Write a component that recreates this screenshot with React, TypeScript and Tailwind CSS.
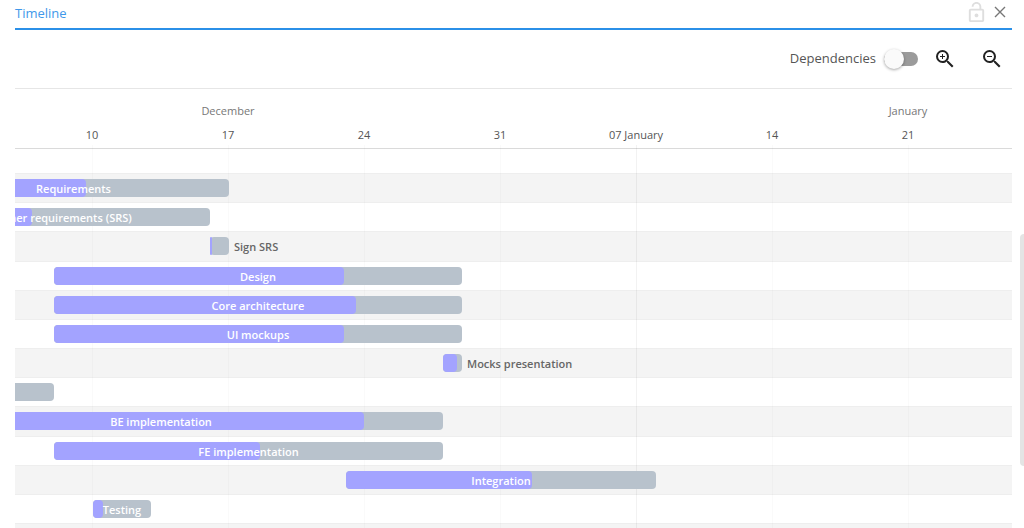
import { useState } from "react";
import { MdLockOpen, MdZoomIn, MdZoomOut } from "react-icons/md";

const WEEK_WIDTH = 136;
// x of December 10 inside the chart
const ORIGIN = 77;

const dayToX = (day: number) =>
  Math.ceil(ORIGIN + ((day - 10) * WEEK_WIDTH) / 7 + 0.5);

type Task = {
  name: string;
  // days counted from December 1, so 39 is January 8
  start: number;
  end: number;
  progress: number;
  labelOutside?: boolean;
};

const tasks: Task[] = [
  { name: "Requirements", start: 1, end: 17, progress: 54 },
  { name: "Other requirements (SRS)", start: 1, end: 16, progress: 39 },
  { name: "Sign SRS", start: 16, end: 17, progress: 8, labelOutside: true },
  { name: "Design", start: 8, end: 29, progress: 71 },
  { name: "Core architecture", start: 8, end: 29, progress: 74 },
  { name: "UI mockups", start: 8, end: 29, progress: 71 },
  { name: "Mocks presentation", start: 28, end: 29, progress: 76, labelOutside: true },
  { name: "", start: 1, end: 8, progress: 0 },
  { name: "BE implementation", start: -1, end: 28, progress: 86 },
  { name: "FE implementation", start: 8, end: 28, progress: 53 },
  { name: "Integration", start: 23, end: 39, progress: 60 },
  { name: "Testing", start: 10, end: 13, progress: 17 },
];

const weeks = [
  { label: "10" },
  { label: "17", month: "December" },
  { label: "24" },
  { label: "31" },
  { label: "07 January", strong: true },
  { label: "14" },
  { label: "21", month: "January" },
];

function TaskBar({ task }: { task: Task }) {
  const left = dayToX(task.start);
  const width = dayToX(task.end) - left;

  return (
    <div
      className="absolute top-[5px] z-10 h-[18px] rounded bg-[#b8c2cc]"
      style={{ left, width }}
    >
      <div
        className="h-full rounded bg-[#a3a3ff]"
        style={{ width: `${task.progress}%` }}
      />
      <span
        className={
          task.labelOutside
            ? "absolute top-0 left-full pl-[5px] leading-[19px] whitespace-nowrap text-[#666]"
            : "absolute inset-0 text-center leading-[19px] whitespace-nowrap text-white"
        }
      >
        {task.name}
      </span>
    </div>
  );
}

export default function App() {
  const [dependencies, setDependencies] = useState(false);

  return (
    <div className="relative h-screen overflow-hidden bg-white pl-[15px] pr-3 font-['Open_Sans','Noto_Sans',sans-serif] text-[#555]">
      <header className="flex h-[30px] items-center justify-between border-b-2 border-[#2b90e8] pr-0.5">
        <h1 className="text-[13px] text-[#3f98ea]">Timeline</h1>
        <div className="flex items-center gap-0.5 pb-1">
          <button type="button" aria-label="Unlock" className="text-[#dedede]">
            <MdLockOpen size={23} />
          </button>
          <button type="button" aria-label="Close" className="p-1 text-[#777]">
            <svg width="12" height="12" viewBox="0 0 12 12" fill="none" stroke="currentColor" strokeWidth="1.4">
              <path d="M1 1l10 10M11 1L1 11" />
            </svg>
          </button>
        </div>
      </header>

      <div className="flex h-[59px] items-center justify-end border-b border-[#e6e6e6] pr-2">
        <label className="flex items-center gap-2 text-[13px]">
          Dependencies
          <input
            type="checkbox"
            role="switch"
            checked={dependencies}
            onChange={(e) => setDependencies(e.target.checked)}
            className="relative h-[14px] w-[34px] appearance-none rounded-full bg-[#9b9b9b] before:absolute before:-top-[3px] before:left-0 before:size-5 before:rounded-full before:bg-[#fafafa] before:shadow-[0_1px_3px_rgba(0,0,0,0.35)] checked:bg-[#a3a3ff] checked:before:left-[14px]"
          />
        </label>
        <button type="button" aria-label="Zoom in" className="ml-[15px] text-[#222]">
          <MdZoomIn size={24} />
        </button>
        <button type="button" aria-label="Zoom out" className="ml-[23px] text-[#222]">
          <MdZoomOut size={24} />
        </button>
      </div>

      <div className="overflow-hidden">
        <div className="flex h-[60px] border-b border-[#dadada] pt-3 pl-[9px] text-center text-[11px] leading-5">
          {weeks.map((week) => (
            <div key={week.label} className="flex w-[136px] shrink-0 flex-col gap-1">
              <span className="h-5 text-[#777]">{week.month}</span>
              <span className="h-5">{week.label}</span>
            </div>
          ))}
        </div>

        <div className="relative pt-6">
          <div className="flex h-[350px] flex-col text-[11px] font-semibold">
            {tasks.map((task, i) => (
              <div
                key={i}
                className="relative flex-1 border-t border-[#eeeeee] odd:bg-[#f4f4f4]"
              >
                <TaskBar task={task} />
              </div>
            ))}
          </div>
          <div className="h-[29px] border-t border-[#eeeeee] bg-[#f4f4f4]" />

          {weeks.map((week, i) => (
            <div
              key={week.label}
              className={`pointer-events-none absolute -top-1 bottom-0 w-px ${week.strong ? "bg-black/5" : "bg-black/2"}`}
              style={{ left: ORIGIN + i * WEEK_WIDTH }}
            />
          ))}
        </div>
      </div>

      <div className="absolute top-[234px] right-0 h-[232px] w-1 rounded-l bg-[#e4e4e4]" />
    </div>
  );
}
